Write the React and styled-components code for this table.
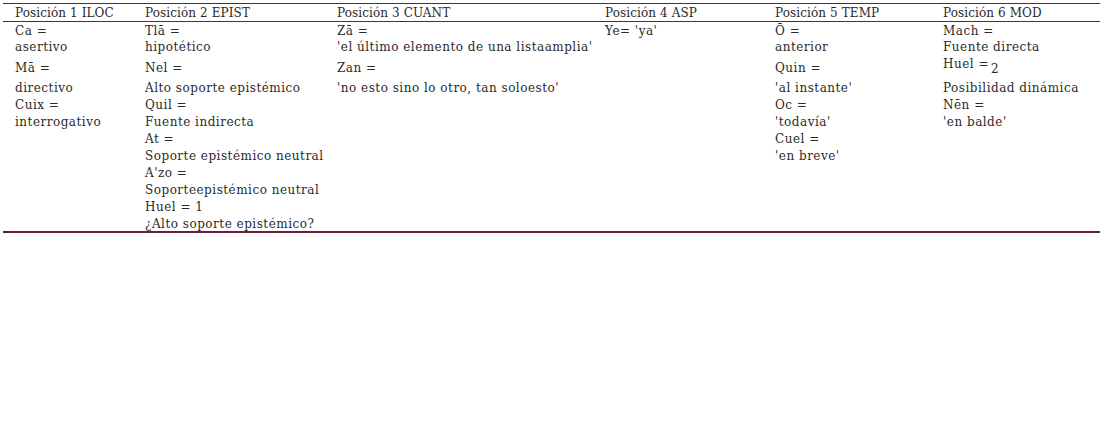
import React from "react";
import styled, { createGlobalStyle } from "styled-components";

const GlobalStyle = createGlobalStyle`
  body {
    margin: 0;
    background: #fff;
    font-family: "DejaVu Serif", "Liberation Serif", serif;
  }
`;

// line heights, row by row, as they fall in the scanned table
const ROWS = [16, 21, 20, 17, 17, 17, 17, 17, 17, 17, 17, 15];

const columns = [
  { title: "Posición 1 ILOC", lines: ["Ca =", "asertivo", "Mā =", "directivo", "Cuix =", "interrogativo"] },
  {
    title: "Posición 2 EPIST",
    lines: [
      "Tlā =", "hipotético", "Nel =", "Alto soporte epistémico", "Quil =", "Fuente indirecta",
      "At =", "Soporte epistémico neutral", "A'zo =", "Soporteepistémico neutral", "Huel = 1",
      "¿Alto soporte epistémico?",
    ],
  },
  { title: "Posición 3 CUANT", lines: ["Zā =", "'el último elemento de una listaamplia'", "Zan =", "'no esto sino lo otro, tan soloesto'"] },
  { title: "Posición 4 ASP", lines: ["Ye= 'ya'"] },
  { title: "Posición 5 TEMP", lines: ["Ō =", "anterior", "Quin =", "'al instante'", "Oc =", "'todavía'", "Cuel =", "'en breve'"] },
  { title: "Posición 6 MOD", lines: ["Mach =", "Fuente directa", { raised: "Huel =", sub: "2" }, "Posibilidad dinámica", "Nēn =", "'en balde'"] },
];

export default function App() {
  return (
    <>
      <GlobalStyle />
      <Table>
        <Head>
          {columns.map((c) => (
            <HeadCell key={c.title}>{c.title}</HeadCell>
          ))}
        </Head>
        <Body>
          {columns.map((c) => (
            <Column key={c.title}>
              {c.lines.map((l, i) => (
                <Line key={i} h={ROWS[i]}>
                  {typeof l === "string" ? (
                    l
                  ) : (
                    <Raised>
                      {l.raised}
                      <Sub>{l.sub}</Sub>
                    </Raised>
                  )}
                </Line>
              ))}
            </Column>
          ))}
        </Body>
      </Table>
    </>
  );
}

const Table = styled.div`
  margin: 3px 3px 0 3px;
  width: 1097px;
  border-top: 1px solid #6d1d3c;
  border-bottom: 2px solid #6d1d3c;
  color: #2a2a2a;
  font-size: 12px;
`;

const Grid = styled.div`
  display: grid;
  grid-template-columns: 130px 192px 268px 170px 168px 1fr;
  padding-left: 12px;
`;

const Head = styled(Grid)`
  height: 17px;
  align-items: center;
  border-bottom: 1px solid #6d1d3c;
`;

const HeadCell = styled.div`
  white-space: nowrap;
  letter-spacing: 0.1px;
`;

const Body = styled(Grid)`
  padding-top: 1px;
`;

const Column = styled.div`
  display: flex;
  flex-direction: column;
`;

const Line = styled.div`
  height: ${(p) => p.h}px;
  line-height: 16px;
  white-space: nowrap;
  letter-spacing: 0.5px;
`;

const Raised = styled.span`
  position: relative;
  top: -4px;
`;

const Sub = styled.span`
  position: relative;
  top: 5px;
  margin-left: 2px;
`;
